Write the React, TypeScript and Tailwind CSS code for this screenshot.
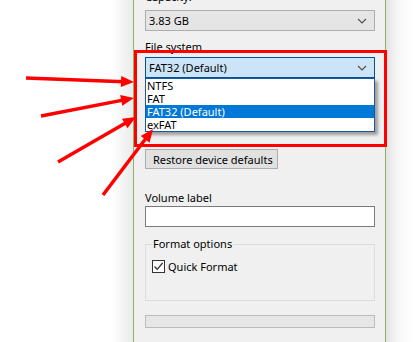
import React from "react";

type Arrow = { x1: number; y1: number; x2: number; y2: number };

const arrows: Arrow[] = [
  { x1: 26, y1: 78, x2: 134, y2: 82 },
  { x1: 41, y1: 116, x2: 134, y2: 98 },
  { x1: 58, y1: 162, x2: 136, y2: 117 },
  { x1: 103, y1: 195, x2: 153, y2: 129 },
];

// arrow head polygon, computed from the line direction
function headPoints(a: Arrow, len = 13, half = 5.5) {
  const dx = a.x2 - a.x1;
  const dy = a.y2 - a.y1;
  const d = Math.hypot(dx, dy);
  const ux = dx / d;
  const uy = dy / d;
  const bx = a.x2 - ux * len;
  const by = a.y2 - uy * len;
  return `${a.x2},${a.y2} ${bx - uy * half},${by + ux * half} ${bx + uy * half},${by - ux * half}`;
}

const Chevron: React.FC = () => (
  <svg width="10" height="6" viewBox="0 0 10 6" className="shrink-0">
    <path d="M1 1 L5 5 L9 1" fill="none" stroke="#4d4d4d" strokeWidth="1.1" />
  </svg>
);

const options = ["NTFS", "FAT", "FAT32 (Default)", "exFAT"];

const App: React.FC = () => {
  return (
    <div className="relative w-[414px] h-[342px] overflow-hidden bg-white text-[11px] text-black whitespace-nowrap font-['Noto_Sans','Open_Sans',sans-serif]">
      <div className="flex h-full">
        {/* left empty area with window shadow */}
        <div className="w-[133px] shrink-0 bg-[linear-gradient(to_right,#ffffff_0%,#ffffff_84%,#ebebeb_100%)]" />

        {/* format dialog */}
        <div className="w-[253px] shrink-0 h-full border-x border-[#8fb06a] bg-[#f0f0f0] pl-[11px] pr-[10px] flex flex-col">
          <div className="-mt-[11px] h-[15px] leading-[15px]">Capacity:</div>
          <div className="mt-[6px] h-[21px] border border-[#adadad] bg-[#e5e5e5] flex items-center justify-between pl-[3px] pr-[7px]">
            <span className="leading-[15px]">3.83 GB</span>
            <Chevron />
          </div>

          <div className="mt-[8px] h-[15px] leading-[15px]">File system</div>
          <div className="relative mt-[3px]">
            <div className="h-[21px] border border-[#005499] bg-[#cce4f7] flex items-center justify-between pl-[3px] pr-[7px]">
              <span className="leading-[15px]">FAT32 (Default)</span>
              <Chevron />
            </div>
            <div className="absolute left-0 right-0 top-[21px] z-10 border border-[#1a5b9c] bg-white shadow-[3px_3px_3px_rgba(0,0,0,0.35)]">
              {options.map((o) => (
                <div
                  key={o}
                  className={
                    o === "FAT32 (Default)"
                      ? "h-[13px] leading-[13px] pl-[1px] bg-[#0078d7] text-white"
                      : "h-[13px] leading-[13px] pl-[1px]"
                  }
                >
                  {o}
                </div>
              ))}
            </div>
          </div>

          <div className="mt-[71px] w-[133px] h-[20px] border border-[#adadad] bg-[#e1e1e1] flex items-center pl-[7px] leading-[15px]">
            Restore device defaults
          </div>

          <div className="mt-[21px] h-[15px] leading-[15px]">Volume label</div>
          <div className="mt-[1px] h-[21px] border border-[#7a7a7a] bg-white" />

          <div className="relative mt-[17px] h-[57px] border border-[#dcdcdc]">
            <span className="absolute -top-[9px] left-[6px] px-[1px] bg-[#f0f0f0] leading-[15px]">
              Format options
            </span>
            <div className="mt-[14px] ml-[6px] flex items-center gap-[3px]">
              <div className="w-[13px] h-[13px] border border-[#333333] bg-white flex items-center justify-center">
                <svg width="11" height="11" viewBox="0 0 11 11">
                  <path d="M1.5 5.5 L4.2 8.3 L9.6 2" fill="none" stroke="#333333" strokeWidth="1.3" />
                </svg>
              </div>
              <span className="leading-[15px]">Quick Format</span>
            </div>
          </div>

          <div className="mt-[14px] h-[13px] border border-[#bcbcbc] bg-[#e6e6e6]" />
        </div>

        {/* right side with window shadow */}
        <div className="flex-1 bg-[linear-gradient(to_right,#e2e2e2_0%,#f6f6f6_40%,#ffffff_100%)]" />
      </div>

      {/* red annotation: box and arrows */}
      <div className="absolute left-[134px] top-[50px] w-[253px] h-[97px] border-[3px] border-[#ff0000] z-20 pointer-events-none" />
      <svg className="absolute inset-0 z-20 pointer-events-none" width="414" height="342">
        {arrows.map((a, i) => {
          const d = Math.hypot(a.x2 - a.x1, a.y2 - a.y1);
          return (
            <g key={i}>
              <line
                x1={a.x1}
                y1={a.y1}
                x2={a.x2 - ((a.x2 - a.x1) / d) * 10}
                y2={a.y2 - ((a.y2 - a.y1) / d) * 10}
                stroke="#ff0000"
                strokeWidth="3.5"
              />
              <polygon points={headPoints(a)} fill="#ff0000" />
            </g>
          );
        })}
      </svg>
    </div>
  );
};

export default App;
